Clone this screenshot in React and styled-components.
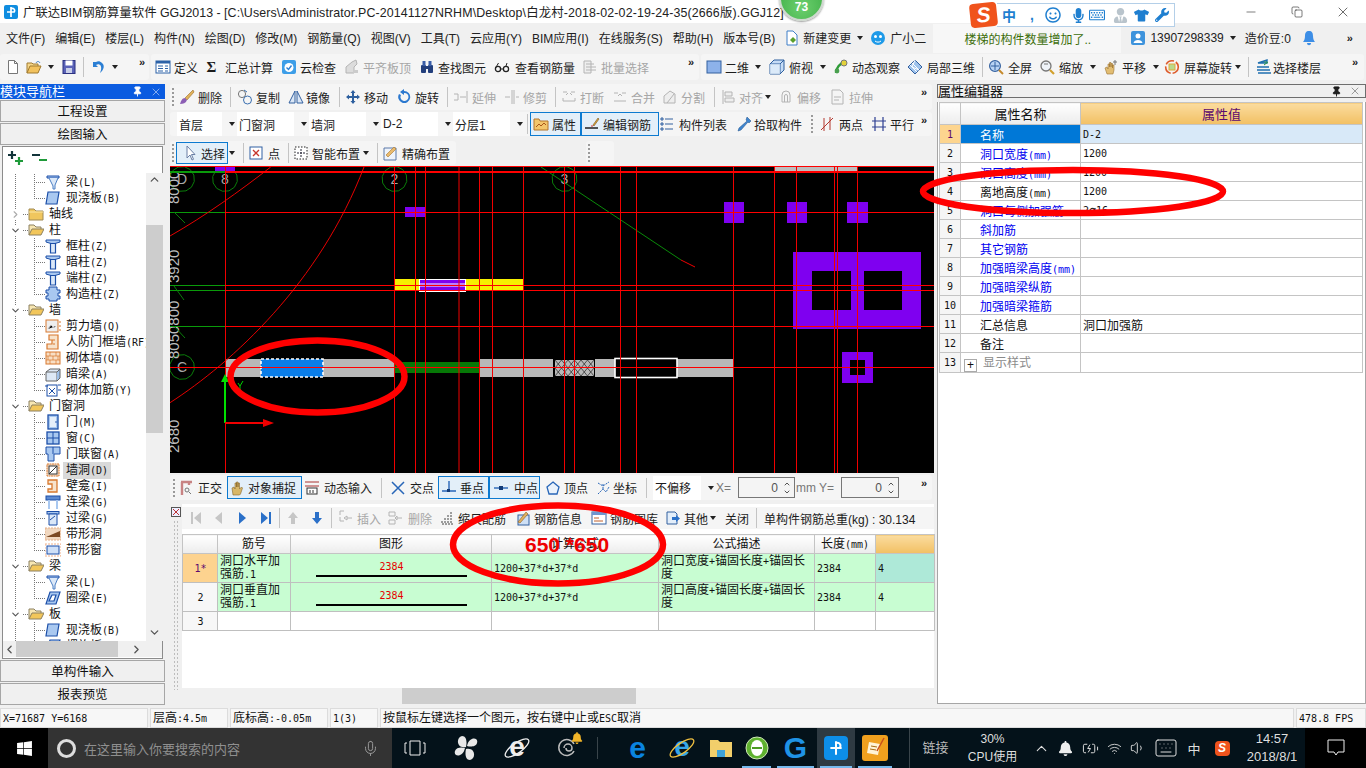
import React from "react";
import styled, { createGlobalStyle } from "styled-components";
import { FaBell, FaMicrophone, FaRegKeyboard, FaTshirt, FaWindows, FaWrench, FaRegSmile, FaUserTie } from "react-icons/fa";
import { ChevronUp, ChevronDown, ChevronLeft, ChevronRight, Mic, Wifi, Volume1, Keyboard, X, Minus, Copy, Pin, BatteryCharging } from "lucide-react";

const UI = `"Liberation Sans", "Noto Sans CJK SC", sans-serif`;

const Global = createGlobalStyle`
  html, body { margin: 0; padding: 0; background: #f0f0f0; overflow: hidden; }
  #root { width: 1366px; height: 768px; }
  * { box-sizing: border-box; }
`;

const Page = styled.div`
  position: relative;
  width: 1366px;
  height: 768px;
  overflow: hidden;
  display: flex;
  flex-direction: column;
  background: #f0f0f0;
  font-family: ${UI};
  font-size: 12px;
  color: #111;
`;

/* title + menu */
const TitleBar = styled.div`
  height: 23px;
  background: #fff;
  display: flex;
  align-items: center;
  padding-left: 3px;
  gap: 4px;
  font-size: 12.4px;
  white-space: nowrap;
  position: relative;
`;
const TitleText = styled.span`
  width: 790px;
  color: #222;
`;
const TitlePath = styled.span`
  letter-spacing: 0.13px;
`;
const WinBtns = styled.div`
  margin-left: auto;
  display: flex;
  color: #222;
`;
const WinBtn = styled.div`
  width: 46px;
  height: 23px;
  display: flex;
  align-items: center;
  justify-content: center;
`;
const MenuBar = styled.div`
  height: 31px;
  display: flex;
  align-items: center;
  padding-bottom: 2px;
  white-space: nowrap;
`;
const MenuItem = styled.span`
  padding-left: ${(p) => p.$pl ?? 10}px;
  color: #222;
`;
const NewsBox = styled.div`
  width: 188px;
  height: 29px;
  margin: 2px 0 0 7px;
  background: #f7f7f7;
  color: #3c6e0a;
  display: flex;
  align-items: center;
  padding-left: 31px;
`;

/* generic toolbar pieces */
const Bar = styled.div`
  display: flex;
  height: ${(p) => p.$h}px;
  margin-top: ${(p) => p.$mt ?? 0}px;
  gap: 2px;
  flex: none;
`;
const Strip = styled.div`
  width: ${(p) => p.$w}px;
  height: 100%;
  background: #f5f5f5;
  border-radius: 3px;
  display: flex;
  align-items: center;
  padding-left: ${(p) => p.$pl}px;
  white-space: nowrap;
  flex: none;
`;
const Slot = styled.div`
  width: ${(p) => p.$w}px;
  flex: none;
  display: flex;
  align-items: center;
  height: 100%;
  color: ${(p) => (p.$off ? "#a6a6a6" : "#1c1c1c")};
  gap: ${(p) => p.$gap ?? 3}px;
`;
const Pressed = styled.div`
  width: ${(p) => p.$w}px;
  height: ${(p) => p.$h ?? 24}px;
  flex: none;
  display: flex;
  align-items: center;
  padding-left: ${(p) => p.$pl ?? 2}px;
  gap: ${(p) => p.$gap ?? 3}px;
  background: #e3eff9;
  border: 1px solid #0c7ad0;
`;
const Caret = styled.i`
  width: 0;
  height: 0;
  border: 3px solid transparent;
  border-top: 4px solid #222;
  border-bottom: 0;
  display: block;
  margin-left: ${(p) => p.$ml ?? 0}px;
`;
const SepLine = styled.i`
  width: 1px;
  height: 20px;
  background: #c4c4c4;
  display: block;
`;
const Grip = styled.i`
  width: 2px;
  height: 18px;
  display: block;
  background-image: linear-gradient(#9a9a9a 50%, transparent 50%);
  background-size: 2px 4px;
`;
const More = styled.span`
  font-size: 11px;
  font-weight: bold;
  font-family: "Liberation Sans", sans-serif;
  align-self: flex-start;
  margin-top: 2px;
  color: #222;
`;
const ComboBox = styled.div`
  width: ${(p) => p.$w}px;
  height: 24px;
  background: #fff;
  display: flex;
  align-items: center;
  padding-left: 2px;
  flex: none;
`;
const SigmaMark = styled.span`
  font: bold 15px "Liberation Serif", serif;
  width: 13px;
  text-align: center;
`;
const SimBox = styled.span`
  font-family: "DejaVu Sans Mono", monospace;
  font-size: 10px;
`;
const FieldLabel = styled.span`
  color: #777;
`;

function Sim({ children }) {
  const parts = String(children).split(/([\x00-\x7f]+)/);
  return (
    <>
      {parts.map((p, i) => (i % 2 ? <SimBox key={i}>{p}</SimBox> : p))}
    </>
  );
}

/* tiny colored drawings, all in a 16 box */
const S = "#1c4fa8";
const L = "#a9c8f0";
const Gy = "#b4b4b4";
const Tan = "#d8792f";
const paths = {
  app: <><rect x="1" y="1" width="14" height="14" rx="2" fill="#0f8de0" /><path d="M8 3v10M4 8h8M8 5a2 2 0 0 1 3 3" stroke="#fff" strokeWidth="1.7" fill="none" /></>,
  new: <><path d="M3.5 1.5h6l3 3v10h-9z" fill="#fff" stroke="#777" /><path d="M9.5 1.5v3h3" fill="none" stroke="#777" /></>,
  open: <><path d="M1 14V4h5l1 1h5v2" fill="#f6d78a" stroke="#a07a30" /><path d="M1 14l3-7h11l-3 7z" fill="#f2c25e" stroke="#a07a30" /><path d="M10 4c1-2 3-2 4 0" stroke="#3a7dc4" fill="none" /></>,
  save: <><rect x="2" y="1.5" width="12" height="13" fill="#5a62b8" stroke="#2b3180" /><rect x="4.5" y="1.5" width="7" height="5" fill="#fff" /><rect x="5" y="9" width="6" height="5" fill="#c9cfe8" /></>,
  undo: <path d="M3 3v5h5L6 6c3-2 6 0 5 5l-1 3c4-3 5-8 2-10-2-2-4-2-6-1z" fill="#2c7fd4" />,
  define: <><rect x="1" y="2" width="14" height="12" fill="#fff" stroke="#2c62a8" /><rect x="1" y="2" width="14" height="2.5" fill="#2c62a8" /><path d="M3 7h5M3 9.5h5M3 12h5M10 7h3M10 9.5h3M10 12h3" stroke="#2c62a8" /></>,
  cloud: <><rect x="1" y="1" width="14" height="14" rx="2" fill="#3d9ee8" /><circle cx="8" cy="8.5" r="4.5" fill="#fff" /><path d="M5.5 8.5l2 2 3-4" stroke="#2c7fd4" strokeWidth="1.4" fill="none" /></>,
  flat: <><path d="M2 14V8l6-5 4-2 1 4-3 3v6z" fill="#dcdcdc" stroke={Gy} /><path d="M9 11h5v3H9z" fill="#ccc" /></>,
  binoc: <><rect x="2" y="6" width="5" height="8" rx="1" fill="#233f7c" /><rect x="9" y="6" width="5" height="8" rx="1" fill="#233f7c" /><rect x="3.5" y="2" width="3" height="5" fill="#3a5ea8" /><rect x="9.5" y="2" width="3" height="5" fill="#3a5ea8" /><rect x="6.5" y="7" width="3" height="3" fill="#233f7c" /></>,
  glasses: <><circle cx="4" cy="10" r="2.6" fill="none" stroke="#222" strokeWidth="1.3" /><circle cx="12" cy="10" r="2.6" fill="none" stroke="#222" strokeWidth="1.3" /><path d="M6.5 10h3M1.5 9l3-5M12 7l1-3" stroke="#222" /></>,
  batch: <><path d="M2 2h7v12H2z" fill="#eee" stroke={Gy} /><path d="M4 5h8M4 8h10M4 11h10" stroke={Gy} /></>,
  square: <rect x="1" y="2" width="14" height="12" fill="#8db2ea" stroke="#33609f" />,
  cube: <><path d="M1 5l4-4h10v10l-4 4H1z" fill="#c6dcf6" stroke="#2d5f9e" /><path d="M1 5h10v10M11 5l4-4" fill="none" stroke="#2d5f9e" /><path d="M1 5h10v10H1z" fill="#e4effb" opacity=".7" /></>,
  orbit: <><path d="M3 14c0-5 4-10 9-11" stroke="#2e9c37" strokeWidth="2.4" fill="none" /><circle cx="11" cy="4" r="3" fill="#e3d23a" stroke="#777" /><circle cx="4" cy="12" r="2.4" fill="#4aa04f" /></>,
  local: <><path d="M8 1l7 7-7 7-7-7z" fill="#9fc3ec" stroke="#33609f" /><path d="M5 4l7 7M8 1l-3 7 7 3M3 6l7 7" stroke="#fff" fill="none" /></>,
  full: <><circle cx="7" cy="7" r="5.4" fill="#b9d4f4" stroke="#33609f" strokeWidth="1.2" /><path d="M7 3v8M3 7h8" stroke="#33609f" /><path d="M11 11l4 4" stroke="#c58a2c" strokeWidth="2" /></>,
  zoom: <><circle cx="7" cy="7" r="5" fill="#eef3f9" stroke="#777" strokeWidth="1.3" /><path d="M11 11l4 4" stroke="#d2a02c" strokeWidth="2.2" /><path d="M5 5h4" stroke="#777" /></>,
  pan: <><path d="M4 15l-2-6 2-1 1 2V5h1.5v3V3.5H8V8V4.5h1.5V9V6H11v5l-1 4z" fill="#e2bd72" stroke="#9c7433" strokeWidth=".6" /><path d="M12 1v5M10 3h4" stroke="#777" /></>,
  spin: <><circle cx="8" cy="8" r="6.3" fill="none" stroke="#de5a2b" strokeWidth="1.6" strokeDasharray="9 2" /><rect x="5" y="5" width="6" height="6" fill="#b9d98c" stroke="#e1a93a" /></>,
  floors: <><path d="M2 4l9-3v3H2zM1 8h12M1 11h13M2 14h13" stroke="#1f6fb0" strokeWidth="1.4" fill="#6cbf54" /><path d="M8 6l4-3" stroke="#2e9c37" /></>,
  doc: <><path d="M3 1h6l4 4v10H3z" fill="#fff" stroke="#3f7fc8" /><path d="M9 7l3 3-3 3-3-3z" fill="#5aa02c" /></>,
  xiao: <><circle cx="8" cy="8" r="7" fill="#1e9ae8" /><circle cx="5.5" cy="6.5" r="1.5" fill="#fff" /><circle cx="10.5" cy="6.5" r="1.5" fill="#fff" /><path d="M5 11c2 1.5 4 1.5 6 0" stroke="#fff" fill="none" /></>,
  user: <><rect x="1" y="1" width="14" height="14" rx="2" fill="#3d93dc" /><circle cx="8" cy="6" r="2.5" fill="#fff" /><path d="M3.5 13c.5-4 8.500-4 9 0z" fill="#fff" /></>,
  alarm: <path d="M8 1c3 0 4 2 4 5 0 3 1 5 2 6H2c1-1 2-3 2-6 0-3 1-5 4-5zM6 13h4c0 3-4 3-4 0z" fill="#3d8ee6" />,
  brush: <><path d="M14 1L6 9l2 2 7-8z" fill="#e0b35a" stroke="#9c6a2a" strokeWidth=".6" /><path d="M6 9c-3 0-4 3-5 6 3 0 6-1 7-4z" fill="#8d5fb5" /></>,
  copy2: <><circle cx="5" cy="5" r="3.6" fill="none" stroke="#777" /><circle cx="10.500" cy="11" r="4" fill="none" stroke="#3a6fb0" /><path d="M7 1l3 2" stroke="#3a6fb0" /></>,
  mirror: <path d="M7 2L1 14h6zM9 2l6 12H9z" fill="#dbe7f6" stroke="#33609f" />,
  move: <path d="M8 1l2.500 3H9v3h3V5.500L15 8l-3 2.500V9H9v3h1.500L8 15l-2.500-3H7V9H4v1.500L1 8l3-2.500V7h3V4H5.500z" fill="#2d5f9e" />,
  rotate: <path d="M8 2a6 6 0 1 1-5 3l2 1a4 4 0 1 0 3-2v2L4 3l4-3z" fill="#2b78cf" />,
  extend: <path d="M1 5h4v6H1M7 8h6M14 2v12" stroke={Gy} fill="none" />,
  trim: <path d="M8 1v14M10 1v14M1 8h5M12 8h3" stroke={Gy} fill="none" />,
  brk: <path d="M2 3h4M10 3h4M2 12h12V9M2 9v3M5 6l2-2M11 6L9 4" stroke={Gy} fill="none" />,
  merge: <path d="M2 4h4M10 4h4M2 12h12M6 7l2-2 2 2" stroke={Gy} fill="none" />,
  split: <path d="M2 14V7l6-5 5 3v9zM5 14l7-9" stroke={Gy} fill="#eee" />,
  align: <path d="M3 1v14M5 3h7v4H5zM5 9h9v4H5z" stroke={Gy} fill="#eee" />,
  offset: <path d="M4 13V6a4 4 0 0 1 8 0v7zM6.500 13V7a1.500 1.500 0 0 1 3 0v6" stroke={Gy} fill="none" />,
  stretch: <path d="M2 1h8l3 3v11H2zM4 8h7M4 11h5" stroke={Gy} fill="#f4f4f4" />,
  attr: <><path d="M1 3h5l1 2h8v9H1z" fill="#f3c66b" stroke="#b4742a" /><path d="M3 11l3-3 2 2 3-3 2 2" stroke="#a9561a" fill="none" /></>,
  pencil: <><path d="M9 9l5-7 1 1-5 7z" fill="#d8a03a" stroke="#7d5a1e" strokeWidth=".6" /><path d="M1 12h13" stroke="#111" strokeWidth="1.400" /><path d="M7 10h2" stroke="#c33" /></>,
  list: <path d="M2 2h2v2H2zM2 7h2v2H2zM2 12h2v2H2zM6 3h8M6 8h8M6 13h8" stroke="#33609f" fill="#cfe0f5" />,
  dropper: <path d="M11 1l4 4-2 2-1-1-7 8-3 1 1-3 8-7-1-1z" fill="#3f86cf" stroke="#1f4f88" strokeWidth=".5" />,
  two: <path d="M2 14L14 2M5 2v13M11 1v13" stroke="#b4382f" fill="none" />,
  par: <path d="M4 1v14M12 1v14M1 5h14M1 11h14" stroke="#2e3f92" strokeWidth="1.2" />,
  cursor: <path d="M5 1v12l3-3 2 5 1.500-.7-2-4.800H13z" fill="#fff" stroke="#6a7fa5" />,
  point: <><rect x="2" y="2" width="12" height="12" fill="#fff" stroke="#3160a4" /><path d="M5 5l6 6M11 5l-6 6" stroke="#c6362c" strokeWidth="1.300" /></>,
  smart: <><rect x="2" y="2" width="12" height="12" fill="#fff" stroke="#222" strokeDasharray="1.500 1.500" /><path d="M8 4v8M4 8h8" stroke="#223" strokeDasharray="2 1" /></>,
  precise: <><path d="M2 3h12v12H2z" fill="#eef3fa" stroke="#5a78a8" /><path d="M4 10l8-8 2 2-8 8z" fill="#e9bb6e" stroke="#a8742c" strokeWidth=".6" /></>,
  ortho: <><path d="M3 2h11M4 2v13M11 2v3" stroke="#c88383" strokeWidth="2.400" fill="none" /><circle cx="9" cy="10" r="2" fill="none" stroke="#777" /><path d="M11 12l2 2" stroke="#777" /></>,
  snap: <path d="M3 15l-1-7 2-1 1 2V3h1.500v4-5H8v5V3h1.500v6l2-2 1 1-2 6-1 1z" fill="#d8b768" stroke="#87662b" strokeWidth=".6" />,
  dyn: <><path d="M1 2h14M1 6h14" stroke="#a33" /><rect x="3" y="8" width="10" height="6" fill="#fff" stroke="#333" /><path d="M6 10v3M9 10v3" stroke="#333" /></>,
  cross: <path d="M2 2l12 12M14 2L2 14" stroke="#2866b8" strokeWidth="1.500" />,
  perp: <><path d="M8 1v10M1 11h14" stroke="#2866b8" strokeWidth="1.400" /><rect x="6" y="9" width="3" height="3" fill="#123c78" /></>,
  mid: <><path d="M1 8h14" stroke="#2866b8" strokeWidth="1.400" /><rect x="6" y="6" width="4" height="4" fill="#123c78" /></>,
  vertex: <path d="M8 2l6 5-2 7H4L2 7z" fill="#eaf2fb" stroke="#2866b8" strokeWidth="1.300" />,
  coord: <path d="M3 14l5-5 3 3 3-5M8 9V3M3 3l5 3 6-4" stroke="#2866b8" strokeDasharray="2 1" fill="none" />,
  first: <path d="M3 2h2v12H3zM13 2v12L6 8z" fill="#c6c6c6" />,
  prev: <path d="M12 2v12L5 8z" fill="#c6c6c6" />,
  next: <path d="M5 2v12l7-6z" fill="#2b70c8" />,
  last: <path d="M3 2v12l7-6zM11 2h2v12h-2z" fill="#2b70c8" />,
  up: <path d="M8 2l5 6h-3v6H6V8H3z" fill="#c6c6c6" />,
  down: <path d="M8 14l5-6h-3V2H6v6H3z" fill="#2b70c8" />,
  ins: <path d="M3 1h4M3 1v4M3 7v4M3 11h4M10 6l-3 2 3 2zM10 8h5" stroke={Gy} fill="none" />,
  del: <path d="M2 2h6v4H2zM2 10h6v4H2zM10 8h5M8 8l2-2v4z" stroke={Gy} fill="none" />,
  scale: <path d="M2 14h12M2 11v3M5 8v6M8 5v9M11 2v12" stroke="#444" strokeDasharray="2 1" fill="none" />,
  info: <><rect x="3" y="5" width="11" height="10" fill="#cfe0f5" stroke="#33609f" /><path d="M3 12l8-10 2 2-8 9z" fill="#e1b25f" stroke="#8a5a20" strokeWidth=".6" /></>,
  lib: <><rect x="1" y="2" width="14" height="12" fill="#fff" stroke="#33609f" /><rect x="1" y="2" width="14" height="3" fill="#6f96cf" /><path d="M3 8h5M3 11h9" stroke="#c0612c" /></>,
  other: <><path d="M2 2h8l2 2v10H2z" fill="#e3eefa" stroke="#33609f" /><path d="M7 7h4V5l4 3.500-4 3.500v-2H7z" fill="#2b70c8" /></>,
  folder: <><path d="M1 5V3h5l2 2h7v9H1z" fill="#f0c65e" stroke="#a08a55" /><path d="M1 6h14" stroke="#fbe7a6" /></>,
  folderOpen: <><path d="M1 13V3h5l2 2h5v2" fill="#f7e6b2" stroke="#8c8060" /><path d="M1 13l3-6h12l-3 6z" fill="#f2c65a" stroke="#8c8060" /></>,
  beam: <><path d="M2 2h12v2H2z" fill={L} stroke={S} /><path d="M4 4l4 8v3h2v-4l3-7" fill="#dbe8f8" stroke="#4b7fc4" /></>,
  slab: <path d="M3 2h11l-2 12H1z" fill={L} stroke={S} strokeWidth="1.200" />,
  column: <><path d="M1 2h14v2L10 5.500H6L1 4z" fill={L} stroke={S} /><path d="M5.500 5.500h5V15h-5z" fill="#dbe8f8" stroke={S} strokeWidth="1.200" /></>,
  grid: <path d="M4 1h8v3h3v3h-2v3h2v3h-3v2H4v-2H1v-3h2V7H1V4h3z" fill={L} stroke={S} />,
  shear: <><rect x="1" y="2" width="12" height="12" fill="#eee" stroke={Tan} /><path d="M3 11l3-4 3 3 2-2" stroke="#bbb" /><path d="M14 4h2M14 8h2M14 12h2" stroke={Tan} /></>,
  frame: <path d="M4 1h9v14H2v-5h5V6H4zM7 6h3M8 10h2" fill="#f7e3cc" stroke={Tan} strokeWidth="1.200" />,
  brick: <><rect x="1" y="2" width="14" height="12" fill="#f8dfc5" stroke={Tan} /><path d="M1 6h14M1 10h14M5 2v4M11 2v4M8 6v4M3 6v4M13 6v4M5 10v4M11 10v4" stroke={Tan} strokeWidth=".7" /></>,
  hidden: <><path d="M1 6l4-3h10l-3 3v9H1z" fill="#dde8f5" stroke="#666" /><path d="M12 6H1M12 6l3-3v9l-3 3" stroke="#666" fill="#9fc0e8" /></>,
  reinf: <><rect x="2" y="3" width="10" height="11" fill="#fff" stroke={S} /><path d="M4 6l6 6M10 6l-6 6M13 3h3M13 8h3M0 4h3" stroke={S} /></>,
  door: <><rect x="3" y="1" width="10" height="14" fill={L} stroke={S} strokeWidth="1.300" /><rect x="5" y="3" width="6" height="10" fill="#e6effa" /><circle cx="11" cy="8" r=".8" fill={S} /></>,
  window: <><rect x="2" y="2" width="12" height="12" fill={L} stroke={S} strokeWidth="1.300" /><path d="M8 2v12M2 8h12" stroke={S} /></>,
  doorwin: <><path d="M1 1h14v7H9v7H3V8H1z" fill={L} stroke={S} /><path d="M8 1v7" stroke={S} /></>,
  hole: <><rect x="2" y="2" width="12" height="12" fill="#f3e1cf" stroke={Tan} strokeDasharray="2 .5" /><rect x="4" y="4" width="8" height="8" fill="#fff" stroke="#333" /><path d="M4 12l8-8" stroke="#333" /></>,
  niche: <path d="M3 2h9v12H3v-3h4V6H3z" fill="#f7e3cc" stroke={Tan} strokeWidth="1.300" />,
  link: <><rect x="1" y="2" width="14" height="4" fill="#5d8ad0" stroke={S} /><path d="M4 6v9M12 6v9" stroke={L} strokeWidth="2" /></>,
  lintel: <><rect x="2" y="1.500" width="12" height="2.500" fill={L} stroke={S} /><path d="M4 4h8v11H4z" fill="#dbe8f8" stroke={S} /><path d="M5 10l5-4" stroke={S} /></>,
  stripHole: <><rect x="0" y="2" width="16" height="12" fill="#f1d8c0" stroke="#e6b08a" strokeDasharray="2 1" /><path d="M1 11l14-6v6z" fill="#7c4a24" /></>,
  stripWin: <><rect x="0" y="2" width="16" height="12" fill="#fff" stroke="#f0b08a" strokeDasharray="2 1" /><rect x="2" y="4" width="12" height="8" fill="#cfe0f8" stroke={S} /></>,
  ring: <path d="M5 2h10l-4 12H1zM7 5l-3 6h5l2-6z" fill={L} stroke={S} strokeWidth="1.200" />,
};

const Svg = styled.svg`
  flex: none;
  display: block;
`;
const Icon = ({ n, s = 16 }) => (
  <Svg width={s} height={s} viewBox="0 0 16 16">
    {paths[n]}
  </Svg>
);

/* one toolbar row: x positions turned into widths of flowed slots */
const T = (x, icon, label, o = {}) => ({ x, kind: "tool", icon, label, ...o });
const A = (x) => ({ x, kind: "arrow" });
const Sp = (x) => ({ x, kind: "sep" });
const Gp = (x) => ({ x, kind: "grip" });
const Mo = (x) => ({ x, kind: "more" });
const Cb = (x, label, w) => ({ x, kind: "combo", label, w });
const Nd = (x, node) => ({ x, kind: "node", node });

function ToolStrip({ from, to, items }) {
  return (
    <Strip $w={to - from} $pl={items[0].x - from}>
      {items.map((it, i) => {
        const w = (i + 1 < items.length ? items[i + 1].x : to) - it.x;
        if (it.kind === "arrow")
          return (
            <Slot key={i} $w={w}>
              <Caret />
            </Slot>
          );
        if (it.kind === "sep")
          return (
            <Slot key={i} $w={w}>
              <SepLine />
            </Slot>
          );
        if (it.kind === "grip")
          return (
            <Slot key={i} $w={w}>
              <Grip />
            </Slot>
          );
        if (it.kind === "more")
          return (
            <Slot key={i} $w={w}>
              <More>»</More>
            </Slot>
          );
        if (it.kind === "node")
          return (
            <Slot key={i} $w={w}>
              {it.node}
            </Slot>
          );
        if (it.kind === "combo")
          return (
            <Slot key={i} $w={w}>
              <ComboBox $w={it.w}>{it.label}</ComboBox>
              <Caret $ml={4} />
            </Slot>
          );
        const body = (
          <>
            {it.icon === "sigma" ? <SigmaMark>Σ</SigmaMark> : <Icon n={it.icon} s={it.s ?? 16} />}
            {it.label}
          </>
        );
        if (it.active)
          return (
            <Slot key={i} $w={w}>
              <Pressed $w={it.bw ?? w} $h={it.h} $pl={it.pl} $gap={it.gap}>
                {body}
              </Pressed>
            </Slot>
          );
        return (
          <Slot key={i} $w={w} $off={it.off} $gap={it.gap}>
            {body}
          </Slot>
        );
      })}
    </Strip>
  );
}

/* left navigation */
const Workspace = styled.div`
  height: 624px;
  margin-top: 4px;
  display: flex;
  flex: none;
`;
const NavPanel = styled.div`
  width: 165px;
  display: flex;
  flex-direction: column;
  flex: none;
`;
const NavHead = styled.div`
  height: 15px;
  background: #0a5be0;
  color: #fff;
  font-size: 13px;
  line-height: 15px;
  display: flex;
  align-items: center;
`;
const HeadTools = styled.div`
  margin-left: auto;
  display: flex;
  gap: 7px;
  padding-right: ${(p) => p.$pr ?? 3}px;
  align-items: center;
`;
const NavBtn = styled.div`
  height: 22px;
  margin-top: 1px;
  background: #f0f0f0;
  border: 1px solid #a6a6a6;
  text-align: center;
  line-height: 23px;
  font-size: 12.5px;
`;
const TreeBox = styled.div`
  margin: 1px 2px 0 2px;
  height: 513px;
  border: 1px solid #8c8c8c;
  background: #fff;
  display: flex;
  flex-direction: column;
`;
const TreeTools = styled.div`
  height: 26px;
  display: flex;
  align-items: flex-start;
  padding: 2px 0 0 2px;
  flex: none;
`;
const TreeMid = styled.div`
  display: flex;
  height: 468px;
  flex: none;
`;
const TreeView = styled.div`
  width: 143px;
  overflow: hidden;
  flex: none;
  padding-top: 1px;
`;
const Row = styled.div`
  height: 16px;
  position: relative;
  display: flex;
  align-items: center;
  white-space: nowrap;
  padding-left: ${(p) => (p.$child ? 31 : 5)}px;
  &::before {
    content: "";
    position: absolute;
    left: 12px;
    top: 0;
    width: 1px;
    height: 16px;
    background: linear-gradient(#777 50%, transparent 50%) 0 0 / 1px 2px repeat-y;
  }
  &::after {
    content: "";
    position: absolute;
    left: 31px;
    top: 0;
    width: 1px;
    height: ${(p) => (p.$last ? 8 : 16)}px;
    display: ${(p) => (p.$child ? "block" : "none")};
    background: linear-gradient(#777 50%, transparent 50%) 0 0 / 1px 2px repeat-y;
  }
`;
const Hook = styled.i`
  width: ${(p) => p.$w}px;
  flex: none;
  height: 1px;
  display: block;
  background: linear-gradient(90deg, #777 50%, transparent 50%) 0 0 / 2px 1px repeat-x;
`;
const Chevron = styled.span`
  width: 15px;
  flex: none;
  display: flex;
  justify-content: center;
  color: #555;
  position: relative;
  z-index: 1;
  background: #fff;
`;
const RowLabel = styled.span`
  padding: 0 3px;
  margin-left: ${(p) => p.$ml ?? 2}px;
  line-height: 16px;
  background: ${(p) => (p.$sel ? "#d9d9d9" : "transparent")};
`;
const VBar = styled.div`
  width: 17px;
  flex: none;
  background: #f0f0f0;
  display: flex;
  flex-direction: column;
  align-items: center;
  color: #555;
`;
const Thumb = styled.div`
  width: 17px;
  height: ${(p) => p.$h}px;
  margin-top: ${(p) => p.$mt}px;
  background: #cdcdcd;
`;
const HBar = styled.div`
  height: 16px;
  flex: none;
  background: #f0f0f0;
  display: flex;
  align-items: center;
  color: #555;
  justify-content: space-between;
  padding-right: 19px;
`;
const HThumb = styled.div`
  width: ${(p) => p.$w}px;
  height: 16px;
  margin-left: ${(p) => p.$ml ?? 0}px;
  background: #cdcdcd;
`;

const tree = [
  ["c", "beam", "梁(L)"], ["c", "slab", "现浇板(B)", 1],
  ["f", 0, "轴线"],
  ["f", 1, "柱"], ["c", "column", "框柱(Z)"], ["c", "column", "暗柱(Z)"], ["c", "column", "端柱(Z)"], ["c", "grid", "构造柱(Z)", 1],
  ["f", 1, "墙"], ["c", "shear", "剪力墙(Q)"], ["c", "frame", "人防门框墙(RF)"], ["c", "brick", "砌体墙(Q)"], ["c", "hidden", "暗梁(A)"], ["c", "reinf", "砌体加筋(Y)", 1],
  ["f", 1, "门窗洞"], ["c", "door", "门(M)"], ["c", "window", "窗(C)"], ["c", "doorwin", "门联窗(A)"], ["c", "hole", "墙洞(D)", 0, 1], ["c", "niche", "壁龛(I)"], ["c", "link", "连梁(G)"], ["c", "lintel", "过梁(G)"], ["c", "stripHole", "带形洞"], ["c", "stripWin", "带形窗", 1],
  ["f", 1, "梁"], ["c", "beam", "梁(L)"], ["c", "ring", "圈梁(E)", 1],
  ["f", 1, "板"], ["c", "slab", "现浇板(B)"], ["c", "ring", "螺旋板(B)"],
];

/* center */
const Center = styled.div`
  width: 764px;
  margin-left: 5px;
  display: flex;
  flex-direction: column;
  flex: none;
`;
const Canvas = styled.svg`
  display: block;
  flex: none;
  margin-top: 1px;
  background: #000;
`;
const Lower = styled.div`
  height: 200px;
  margin-top: 4px;
  display: flex;
  flex: none;
`;
const Gutter = styled.div`
  width: 12px;
  flex: none;
  padding-top: 3px;
  display: flex;
  flex-direction: column;
  align-items: center;
  gap: 3px;
`;
const GutterDots = styled.i`
  width: 6px;
  height: 170px;
  display: block;
  background: radial-gradient(#bdbdbd 1px, transparent 1px) 0 0 / 3px 4px;
`;
const Pane = styled.div`
  width: 752px;
  flex: none;
  display: flex;
  flex-direction: column;
  background: #fff;
`;
const PaneBar = styled.div`
  height: 22px;
  margin-top: 3px;
  background: #f5f5f5;
  display: flex;
  flex: none;
`;
const Grid = styled.table`
  margin-top: 5px;
  border-collapse: collapse;
  table-layout: fixed;
  width: 752px;
  flex: none;
  line-height: 13px;
`;
const Th = styled.th`
  height: 19px;
  padding: 0;
  font-weight: normal;
  border: 1px solid #c4c4c4;
  background: ${(p) => (p.$hot ? "linear-gradient(#fbdc9f, #f2c063)" : "linear-gradient(#fff, #ececec)")};
`;
const Td = styled.td`
  height: ${(p) => p.$h}px;
  padding: 0 1px 0 2px;
  border: 1px solid #bfbfbf;
  border-left: ${(p) => (p.$ink ? "1px solid #000" : "1px solid #bfbfbf")};
  background: ${(p) => p.$bg ?? "#fff"};
  text-align: ${(p) => (p.$mid ? "center" : "left")};
  vertical-align: middle;
  color: ${(p) => p.$fg ?? "#111"};
`;
const FigLen = styled.div`
  color: #e60000;
  text-align: center;
  height: 13px;
  margin-top: 1px;
`;
const FigBar = styled.div`
  width: 151px;
  height: 2px;
  background: #000;
  margin: 2px auto 0;
`;
const BottomScroll = styled.div`
  margin-top: auto;
  height: 16px;
  background: #f0f0f0;
  padding-left: 220px;
  flex: none;
`;
const Spin = styled.div`
  width: ${(p) => p.$w}px;
  height: 21px;
  background: #f4f4f4;
  border: 1px solid #777;
  display: flex;
  align-items: center;
  justify-content: flex-end;
  padding-right: 3px;
  gap: 5px;
  color: #555;
  font-family: "Liberation Sans", sans-serif;
  flex: none;
`;
const SpinArrows = styled.div`
  display: flex;
  flex-direction: column;
  color: #555;
`;
const SpacerGap = styled.div`
  width: ${(p) => p.$w}px;
  flex: none;
`;

/* right panel */
const RightPanel = styled.div`
  width: 429px;
  margin-left: 3px;
  flex: none;
  display: flex;
  flex-direction: column;
`;
const RightHead = styled.div`
  height: 14px;
  border: 1px solid #6e6e6e;
  background: #f0f0f0;
  font-size: 13px;
  line-height: 13px;
  display: flex;
  align-items: center;
`;
const RightBody = styled.div`
  margin-top: 4px;
  height: 602px;
  background: #fff;
  border: 1px solid #a6a6a6;
  border-top: 0;
  padding-left: 1px;
`;
const PropGrid = styled.table`
  border-collapse: collapse;
  table-layout: fixed;
  width: 423px;
`;
const PropHead = styled.th`
  height: 22px;
  padding: 0;
  font-weight: normal;
  font-size: 13px;
  border: 1px solid #c4c4c4;
  background: ${(p) => (p.$hot ? "linear-gradient(#fbdc9f, #f2c063)" : "linear-gradient(#fff, #ececec)")};
  color: ${(p) => (p.$hot ? "#5c0a6e" : "#111")};
`;
const PropNum = styled.td`
  height: 19px;
  padding: 0;
  border: 1px solid #c4c4c4;
  text-align: center;
  background: ${(p) => (p.$on ? "#fdd58f" : "#f5f5f5")};
  color: ${(p) => (p.$on ? "#5c0a6e" : "#111")};
`;
const PropName = styled.td`
  padding: 0 0 0 19px;
  white-space: nowrap;
  border: 1px solid #c4c4c4;
  background: ${(p) => (p.$on ? "#0078d7" : "#fff")};
  color: ${(p) => p.$fg};
`;
const PropVal = styled.td`
  padding: 0 0 0 2px;
  border: 1px solid #c4c4c4;
  background: ${(p) => (p.$on ? "#d8e9f8" : "#fff")};
`;
const PlusBox = styled.span`
  display: inline-flex;
  width: 13px;
  height: 13px;
  border: 1px solid #aaa;
  align-items: center;
  justify-content: center;
  margin: 0 6px 0 -16px;
  font-size: 12px;
  line-height: 1;
  color: #111;
  vertical-align: -2px;
`;

const props_ = [
  ["名称", "D-2", "#fff", 1],
  ["洞口宽度(mm)", "1200", "#0000f0"],
  ["洞口高度(mm)", "1200", "#0000f0"],
  ["离地高度(mm)", "1200", "#111"],
  ["洞口每侧加强筋", "2⌀16", "#0000f0"],
  ["斜加筋", "", "#0000f0"],
  ["其它钢筋", "", "#0000f0"],
  ["加强暗梁高度(mm)", "", "#0000f0"],
  ["加强暗梁纵筋", "", "#0000f0"],
  ["加强暗梁箍筋", "", "#0000f0"],
  ["汇总信息", "洞口加强筋", "#111"],
  ["备注", "", "#111"],
  ["显示样式", "", "#8a8a8a"],
];

/* status + taskbar */
const StatusBar = styled.div`
  height: 20px;
  display: flex;
  gap: 2px;
  flex: none;
`;
const StatusCell = styled.div`
  width: ${(p) => p.$w}px;
  flex: none;
  background: #f7f7f7;
  border: 1px solid #dcdcdc;
  padding-left: 2px;
  line-height: 19px;
  white-space: nowrap;
`;
const TaskBar = styled.div`
  height: 40px;
  flex: none;
  display: flex;
  background: #04121a;
  color: #ddd;
`;
const StartBtn = styled.div`
  width: 48px;
  background: #000;
  display: flex;
  align-items: center;
  justify-content: center;
  color: #fff;
  flex: none;
`;
const Search = styled.div`
  width: 344px;
  background: #333;
  display: flex;
  align-items: center;
  padding-left: 9px;
  gap: 8px;
  color: #8f8f8f;
  flex: none;
  font-size: 13px;
`;
const Ring = styled.i`
  width: 19px;
  height: 19px;
  border: 3px solid #ddd;
  border-radius: 50%;
  display: block;
`;
const MicWrap = styled.span`
  margin-left: auto;
  padding-right: 13px;
  display: flex;
  color: #999;
`;
const TaskSlot = styled.div`
  width: ${(p) => p.$w}px;
  margin-left: ${(p) => p.$ml ?? 0}px;
  flex: none;
  display: flex;
  align-items: center;
  justify-content: center;
  position: relative;
  font-size: 13px;
  background: ${(p) => (p.$cur ? "#2e3a42" : p.$black ? "#000" : "transparent")};
  &::after {
    content: "";
    position: absolute;
    bottom: 0;
    left: 3px;
    right: 3px;
    height: 2px;
    background: ${(p) => (p.$run ? "#76b9ed" : "transparent")};
  }
`;
const TaskDivider = styled.i`
  width: 1px;
  height: 22px;
  background: #39444a;
  display: block;
  margin-right: 13px;
`;
const Stack = styled.div`
  width: ${(p) => p.$w}px;
  margin-left: ${(p) => p.$ml ?? 0}px;
  flex: none;
  display: flex;
  flex-direction: column;
  align-items: center;
  justify-content: center;
  line-height: 18px;
  font-size: ${(p) => p.$fs ?? 12}px;
  color: ${(p) => p.$c ?? "#dfdfdf"};
  border-left: ${(p) => (p.$rule ? "1px solid #39444a" : "0")};
  white-space: nowrap;
`;
const LetterTile = styled.span`
  width: ${(p) => p.$s}px;
  height: ${(p) => p.$s}px;
  border-radius: 4px;
  background: ${(p) => p.$bg};
  color: #fff;
  display: flex;
  align-items: center;
  justify-content: center;
  font: italic bold ${(p) => p.$fs}px "Liberation Sans", sans-serif;
`;
const TaskGlyph = styled.span`
  font: ${(p) => (p.$italic ? "italic" : "normal")} bold ${(p) => p.$fs}px "Liberation Sans", sans-serif;
  color: ${(p) => p.$c};
`;
const BellOver = styled(FaBell)`
  position: absolute;
  top: 4px;
  right: 11px;
`;

/* overlays */
const Notes = styled.svg`
  position: absolute;
  left: 0;
  top: 0;
  pointer-events: none;
`;
const RedNote = styled.div`
  position: absolute;
  left: 525px;
  top: 533px;
  color: #ee0000;
  font: bold 21px/24px "Liberation Sans", sans-serif;
  white-space: nowrap;
`;
const Badge = styled.div`
  position: absolute;
  left: 779px;
  top: -24px;
  width: 45px;
  height: 45px;
  border-radius: 50%;
  background: radial-gradient(circle at 50% 70%, #6ccf6e, #35a83e);
  border: 2px solid #cfd8cf;
  box-shadow: 0 1px 2px rgba(0, 0, 0, 0.4);
  color: #fff;
  font: bold 12px "Liberation Sans", sans-serif;
  display: flex;
  align-items: flex-end;
  justify-content: center;
  padding-bottom: 5px;
`;
const Sogou = styled.div`
  position: absolute;
  left: 970px;
  top: 3px;
  width: 205px;
  height: 24px;
  display: flex;
  align-items: center;
`;
const SogouLogo = styled.div`
  width: 27px;
  height: 24px;
  background: #f0531c;
  border-radius: 4px;
  color: #fff;
  font: italic bold 21px/24px "Liberation Sans", sans-serif;
  text-align: center;
  transform: rotate(-6deg);
  flex: none;
`;
const SogouBox = styled.div`
  flex: 1;
  height: 24px;
  background: #fff;
  border: 1px solid #b4cfe8;
  border-left: 0;
  display: flex;
  align-items: center;
  color: #1f7fd0;
  padding-left: 5px;
`;
const SogouItem = styled.span`
  width: ${(p) => p.$w}px;
  flex: none;
  display: flex;
  color: ${(p) => p.$c ?? "#1f7fd0"};
  font-weight: bold;
  font-size: 14px;
`;

const cornerPoly = (cx, cy, r) =>
  Array.from({ length: 12 }, (_, i) => {
    const a = (i * Math.PI) / 6 + 0.2;
    return `${cx + r * Math.cos(a)},${cy + r * Math.sin(a)}`;
  }).join(" ");

const vLines = [225.5, 394.5, 415.5, 425.5, 459, 479.5, 492.5, 523.5, 564.5, 574.5, 620.5, 636.5, 733.5, 774.5, 796.5, 834.5, 837.5, 857.5];

function Drawing() {
  const purple = "#7f00f0";
  return (
    <Canvas width="764" height="307" viewBox="170 166 764 307">
      {/* axis bubbles */}
      {[[182, 179, "D"], [225, 179, "8"], [394.5, 179, "2"], [564.5, 179, "3"], [182, 367, "C"]].map(([x, y, t]) => (
        <g key={x + "" + y}>
          <polygon points={cornerPoly(x, y, 12.5)} fill="none" stroke="#0a7d0a" />
          <text x={x} y={y + 5} textAnchor="middle" fill="#a8a8a8" fontSize="14" fontFamily="Liberation Sans">{t}</text>
        </g>
      ))}
      {/* dimension text */}
      {[["8000", 204], ["3920", 283], ["8050800", 359], ["2680", 453]].map(([t, y]) => (
        <text key={t} transform={`rotate(-90 179 ${y})`} x="179" y={y} fill="#bdbdbd" fontSize="15" fontFamily="Liberation Sans">{t}</text>
      ))}
      <rect x="215" y="166" width="20" height="6" fill={purple} />
      <rect x="775" y="167" width="83" height="5" fill="#bdbdbd" />
      {/* walls */}
      <rect x="225.5" y="359" width="169" height="18" fill="#b8b8b8" />
      <rect x="394.5" y="362" width="85" height="11" fill="#067806" />
      <rect x="479.5" y="359" width="73.500" height="18" fill="#b8b8b8" />
      <rect x="595" y="359" width="138" height="18" fill="#b8b8b8" />
      <g>
        <rect x="555" y="360" width="39" height="16" fill="#b8b8b8" />
        {[0, 1, 2, 3, 4, 5].map((i) => (
          <path key={i} d={`M${555 + i * 6.5} 360l6.500 8-6.500 8M${561.5 + i * 6.5} 360l-6.500 8 6.500 8`} stroke="#222" fill="none" strokeWidth=".7" />
        ))}
      </g>
      <rect x="615" y="358.500" width="62" height="19" fill="#000" stroke="#fff" strokeWidth="1.600" />
      <rect x="261" y="359" width="62" height="18" fill="#0a7de8" stroke="#fff" strokeWidth="1.600" strokeDasharray="3 2" />
      {/* yellow beam */}
      <rect x="394.5" y="279" width="129" height="11" fill="#f6f000" />
      <rect x="419.5" y="279.500" width="46" height="12" fill={purple} stroke="#fff" />
      <path d="M419.500 284h46M419.500 286h46" stroke="#fff" />
      {/* purple columns */}
      <rect x="405" y="207" width="20" height="10" fill={purple} />
      <rect x="724" y="202" width="20" height="21" fill={purple} />
      <rect x="787" y="202" width="20" height="21" fill={purple} />
      <rect x="847" y="202" width="21" height="21" fill={purple} />
      <path fillRule="evenodd" d="M793 252h128v77H793zM812 271v39h39v-39zM864 271v39h38v-39z" fill={purple} />
      <path fillRule="evenodd" d="M842 352h31v31h-31zM850 360v15h15v-15z" fill={purple} />
      {/* green axis stubs */}
      {[212, 285, 290, 326].map((y) => (
        <path key={y} d={`M170 ${y + 0.5}h55`} stroke="#0a9a0a" />
      ))}
      <path d="M170 172h55" stroke="#0a9a0a" strokeWidth="2" />
      <path d="M174 212l11 11M174 286l10 14M174 326l11 12" stroke="#0a7d0a" />
      <path d="M541 167l140 93" stroke="#0a8a0a" />
      <path d="M681 260l14 7" stroke="#e00" />
      {/* red arcs */}
      <path d="M170 236c35-20 70-45 100.700-69" stroke="#e60000" fill="none" />
      <path d="M170 402.700c62-40 150-120 194-235.700" stroke="#e60000" fill="none" />
      {/* red grid */}
      {vLines.map((x) => (
        <path key={x} d={`M${x} 166v307`} stroke="#f00000" />
      ))}
      <path d="M170 166.500h764" stroke="#f00" />
      <path d="M225 172h709" stroke="#f00" strokeWidth="2" />
      {[212.5, 285.5, 290.5, 326.5].map((y) => (
        <path key={y} d={`M225 ${y}h709`} stroke="#f00" />
      ))}
      <path d="M170 367.500h764" stroke="#f00" />
      {/* origin */}
      <path d="M225 423v-42" stroke="#00e000" strokeWidth="2" />
      <path d="M221 382l4-8 4 8z" fill="#00e000" />
      <path d="M238 383l2 3 3-5M240 386v4" stroke="#00d000" fill="none" />
      <path d="M225 423h38" stroke="#f00000" strokeWidth="2" />
      <path d="M263 419l11 4-11 4z" fill="#f00000" />
    </Canvas>
  );
}

const menuLeft = ["文件(F)", "编辑(E)", "楼层(L)", "构件(N)", "绘图(D)", "修改(M)", "钢筋量(Q)", "视图(V)", "工具(T)", "云应用(Y)", "BIM应用(I)", "在线服务(S)", "帮助(H)", "版本号(B)"];

const SpinField = ({ w }) => (
  <Spin $w={w}>
    0
    <SpinArrows>
      <ChevronUp size={8} strokeWidth={3} />
      <ChevronDown size={8} strokeWidth={3} />
    </SpinArrows>
  </Spin>
);

const IeMark = ({ c, ring }) => (
  <Svg width="28" height="28" viewBox="0 0 28 28">
    <text x="14" y="22" textAnchor="middle" fontSize="28" fontWeight="bold" fontFamily="Liberation Sans" fill={c}>e</text>
    <ellipse cx="14" cy="14" rx="14" ry="5" transform="rotate(-35 14 14)" fill="none" stroke={ring} strokeWidth="1.300" />
  </Svg>
);

export default function App() {
  return (
    <Page>
      <Global />
      <TitleBar>
        <Icon n="app" s={16} />
        <TitleText>广联达BIM钢筋算量软件 GGJ2013 - <TitlePath>[C:\Users\Administrator.PC-20141127NRHM\Desktop\白龙村-2018-02-02-19-24-35(2666版).GGJ12]</TitlePath></TitleText>
        <WinBtns>
          <WinBtn><Minus size={14} strokeWidth={1} /></WinBtn>
          <WinBtn><Copy size={12} strokeWidth={1.2} /></WinBtn>
          <WinBtn><X size={16} strokeWidth={1} /></WinBtn>
        </WinBtns>
      </TitleBar>

      <MenuBar>
        {menuLeft.map((m, i) => (
          <MenuItem key={m} $pl={i ? 10 : 6}>{m}</MenuItem>
        ))}
        <MenuItem $pl={9}><Icon n="doc" /></MenuItem>
        <MenuItem $pl={3}>新建变更</MenuItem>
        <MenuItem $pl={6}><Caret /></MenuItem>
        <MenuItem $pl={7}><Icon n="xiao" /></MenuItem>
        <MenuItem $pl={4}>广小二</MenuItem>
        <NewsBox>楼梯的构件数量增加了..</NewsBox>
        <MenuItem $pl={9}><Icon n="user" /></MenuItem>
        <MenuItem $pl={4}>13907298339</MenuItem>
        <MenuItem $pl={6}><Caret /></MenuItem>
        <MenuItem $pl={9}>造价豆:0</MenuItem>
        <MenuItem $pl={10}><Icon n="alarm" /></MenuItem>
        <MenuItem $pl={30}><More>»</More></MenuItem>
      </MenuBar>

      <Bar $h={26}>
        <ToolStrip from={2} to={151} items={[T(7, "new", ""), T(28, "open", ""), A(50), T(63, "save", ""), Sp(85), T(92, "undo", ""), A(114), Mo(141)]} />
        <ToolStrip from={153} to={701} items={[
          T(157, "define", "定义"), T(207, "sigma", "汇总计算", { gap: 7 }), T(283, "cloud", "云检查"),
          T(346, "flat", "平齐板顶", { off: 1 }), T(421, "binoc", "查找图元"), T(496, "glasses", "查看钢筋量", { gap: 5 }),
          T(584, "batch", "批量选择", { off: 1 }), Mo(690),
        ]} />
        <ToolStrip from={703} to={1366} items={[
          T(708, "square", "二维"), A(757), T(771, "cube", "俯视", { gap: 4 }), A(822), T(835, "orbit", "动态观察"), T(909, "local", "局部三维", { gap: 4 }),
          Sp(984), T(990, "full", "全屏", { gap: 4 }), T(1041, "zoom", "缩放", { gap: 4 }), A(1092), T(1105, "pan", "平移"), A(1155),
          T(1166, "spin", "屏幕旋转", { gap: 4 }), A(1237), Sp(1250), T(1258, "floors", "选择楼层", { gap: 1 }), Mo(1354),
        ]} />
      </Bar>

      <Workspace>
        <NavPanel>
          <NavHead>
            模块导航栏
            <HeadTools>
              <Pin size={11} fill="#fff" />
              <X size={12} strokeWidth={1} />
            </HeadTools>
          </NavHead>
          <NavBtn>工程设置</NavBtn>
          <NavBtn>绘图输入</NavBtn>
          <TreeBox>
            <TreeTools>
              <Svg width="44" height="18" viewBox="0 0 44 18">
                <path d="M7 2v8M3 6h8M27 6h8" stroke="#12343a" strokeWidth="2.200" />
                <path d="M14 8v8M10 12h8M34 11h8" stroke="#1f9a3a" strokeWidth="2.200" />
              </Svg>
            </TreeTools>
            <TreeMid>
              <TreeView>
                {tree.map(([k, a, label, last, sel], i) =>
                  k === "f" ? (
                    <Row key={i}>
                      <Chevron>{a ? <ChevronDown size={11} strokeWidth={2.4} /> : <ChevronRight size={11} strokeWidth={2.4} color="#aaa" />}</Chevron>
                      <Hook $w={5} />
                      <Icon n={a ? "folderOpen" : "folder"} />
                      <RowLabel>{label}</RowLabel>
                    </Row>
                  ) : (
                    <Row key={i} $child $last={last}>
                      <Hook $w={11} />
                      <Icon n={a} />
                      <RowLabel $sel={sel}><Sim>{label}</Sim></RowLabel>
                    </Row>
                  )
                )}
              </TreeView>
              <VBar>
                <ChevronUp size={13} strokeWidth={2.4} />
                <Thumb $h={208} $mt={39} />
                <ChevronDown size={13} strokeWidth={2.4} style={{ marginTop: "auto", marginBottom: 2 }} />
              </VBar>
            </TreeMid>
            <HBar>
              <ChevronLeft size={13} strokeWidth={2.4} />
              <HThumb $w={102} $ml={-12} />
              <ChevronRight size={13} strokeWidth={2.4} />
            </HBar>
          </TreeBox>
          <NavBtn>单构件输入</NavBtn>
          <NavBtn>报表预览</NavBtn>
        </NavPanel>

        <Center>
          <Bar $h={26}>
            <ToolStrip from={172} to={934} items={[
              Gp(174), T(181, "brush", "删除"), Sp(232), T(239, "copy2", "复制"), T(290, "mirror", "镜像", { gap: 2 }), Sp(341), T(347, "move", "移动"), T(398, "rotate", "旋转"), Sp(449),
              T(455, "extend", "延伸", { off: 1 }), T(506, "trim", "修剪", { off: 1 }), Sp(557), T(563, "brk", "打断", { off: 1 }), T(614, "merge", "合并", { off: 1 }), T(664, "split", "分割", { off: 1 }), Sp(716),
              T(722, "align", "对齐", { off: 1 }), A(767), T(780, "offset", "偏移", { off: 1 }), T(832, "stretch", "拉伸", { off: 1 }), Mo(923),
            ]} />
          </Bar>
          <Bar $h={24} $mt={2}>
            <ToolStrip from={172} to={934} items={[
              Cb(179, "首层", 45), Cb(239, "门窗洞", 57), Cb(311, "墙洞", 57), Cb(383, "D-2", 57), Cb(455, "分层1", 57), Sp(529),
              T(532, "attr", "属性", { active: 1, pl: 2 }), T(583, "pencil", "编辑钢筋", { active: 1, pl: 2, gap: 3 }),
              T(661, "list", "构件列表", { gap: 4 }), T(738, "dropper", "拾取构件", { gap: 2 }), Gp(813), T(821, "two", "两点", { gap: 4 }), T(873, "par", "平行", { gap: 3 }), Mo(923),
            ]} />
          </Bar>
          <Bar $h={24} $mt={5}>
            <ToolStrip from={172} to={458} items={[
              Gp(174), T(178, "cursor", "选择", { active: 1, bw: 52, h: 22, pl: 5, gap: 3 }), A(231), Sp(245), T(250, "point", "点", { gap: 4 }), Sp(290),
              T(295, "smart", "智能布置", { gap: 3 }), A(365), Sp(379), T(384, "precise", "精确布置", { gap: 4 }),
            ]} />
            <SpacerGap $w={126} />
            <ToolStrip from={586} to={614} items={[Gp(588)]} />
          </Bar>
          <Drawing />
          <Bar $h={25} $mt={2}>
            <ToolStrip from={172} to={934} items={[
              Gp(175), T(180, "ortho", "正交", { gap: 4 }), T(229, "snap", "对象捕捉", { active: 1, pl: 2, gap: 2, bw: 75, h: 23 }), T(306, "dyn", "动态输入", { gap: 4 }), Sp(383),
              T(392, "cross", "交点", { gap: 4 }), T(440, "perp", "垂点", { active: 1, pl: 2, gap: 3, h: 23 }), T(491, "mid", "中点", { active: 1, pl: 3, gap: 5, bw: 51, h: 23 }), T(547, "vertex", "顶点", { gap: 3 }), T(597, "coord", "坐标", { gap: 2 }), Sp(648),
              Cb(655, "不偏移", 48), Nd(718, <FieldLabel>X=</FieldLabel>), Nd(740, <SpinField w={57} />), Nd(798, <FieldLabel>mm Y=</FieldLabel>), Nd(843, <SpinField w={58} />), Mo(923),
            ]} />
          </Bar>
          <Lower>
            <Gutter>
              <Svg width="10" height="10" viewBox="0 0 10 10"><rect x=".5" y=".5" width="9" height="9" fill="#eef" stroke="#555" /><path d="M2 2l6 6M8 2L2 8" stroke="#b33" /></Svg>
              <GutterDots />
            </Gutter>
            <Pane>
              <PaneBar>
                <ToolStrip from={182} to={934} items={[
                  T(188, "first", ""), T(210, "prev", ""), T(234, "next", ""), T(258, "last", ""), Sp(279), T(285, "up", ""), T(309, "down", ""), Sp(331),
                  T(337, "ins", "插入", { off: 1, gap: 4 }), T(387, "del", "删除", { off: 1, gap: 5 }), T(440, "scale", "缩尺配筋", { gap: 2 }), T(515, "info", "钢筋信息", { gap: 3 }), T(591, "lib", "钢筋图库", { gap: 3 }),
                  T(665, "other", "其他", { gap: 3 }), A(710), T(725, "none", "关闭", { s: 0, gap: 0 }), Sp(756), T(764, "none", "单构件钢筋总重(kg) : 30.134", { s: 0, gap: 0 }),
                ]} />
              </PaneBar>
              <Grid>
                <colgroup>
                  {[35, 73, 201, 167, 156, 61, 59].map((w, i) => <col key={i} width={w} />)}
                </colgroup>
                <thead>
                  <tr>
                    <Th />
                    <Th>筋号</Th>
                    <Th>图形</Th>
                    <Th>计算公式</Th>
                    <Th>公式描述</Th>
                    <Th><Sim>长度(mm)</Sim></Th>
                    <Th $hot />
                  </tr>
                </thead>
                <tbody>
                  {[
                    ["1*", "洞口水平加强筋.1", "洞口宽度+锚固长度+锚固长度"],
                    ["2", "洞口垂直加强筋.1", "洞口高度+锚固长度+锚固长度"],
                  ].map(([n, name, desc], i) => (
                    <tr key={n}>
                      <Td $h={29} $mid $bg={i ? "#f7f7f7" : "#fdd38f"} $fg={i ? "#111" : "#5c0a6e"}><Sim>{n}</Sim></Td>
                      <Td $bg="#c8fdd2"><Sim>{name}</Sim></Td>
                      <Td $ink $bg="#c8fdd2"><FigLen><Sim>2384</Sim></FigLen><FigBar /></Td>
                      <Td $bg="#c8fdd2"><Sim>1200+37*d+37*d</Sim></Td>
                      <Td $bg="#c8fdd2"><Sim>{desc}</Sim></Td>
                      <Td $bg="#c8fdd2"><Sim>2384</Sim></Td>
                      <Td $bg={i ? "#c8fdd2" : "#aee9d8"}><Sim>4</Sim></Td>
                    </tr>
                  ))}
                  <tr>
                    <Td $h={19} $mid $bg="#f7f7f7"><Sim>3</Sim></Td>
                    <Td /><Td $ink /><Td /><Td /><Td /><Td />
                  </tr>
                </tbody>
              </Grid>
              <BottomScroll><HThumb $w={234} /></BottomScroll>
            </Pane>
          </Lower>
        </Center>

        <RightPanel>
          <RightHead>
            属性编辑器
            <HeadTools $pr={4}>
              <Pin size={11} fill="#222" />
              <X size={12} strokeWidth={1} color="#444" />
            </HeadTools>
          </RightHead>
          <RightBody>
            <PropGrid>
              <colgroup>
                <col width="21" /><col width="120" /><col width="282" />
              </colgroup>
              <thead>
                <tr>
                  <PropHead />
                  <PropHead>属性名称</PropHead>
                  <PropHead $hot>属性值</PropHead>
                </tr>
              </thead>
              <tbody>
                {props_.map(([name, val, fg, on], i) => (
                  <tr key={name}>
                    <PropNum $on={on}><Sim>{i + 1}</Sim></PropNum>
                    <PropName $on={on} $fg={fg}>
                      {i === 12 && <PlusBox>+</PlusBox>}
                      <Sim>{name}</Sim>
                    </PropName>
                    <PropVal $on={on}><Sim>{val}</Sim></PropVal>
                  </tr>
                ))}
              </tbody>
            </PropGrid>
          </RightBody>
        </RightPanel>
      </Workspace>

      <StatusBar>
        <StatusCell $w={148}><Sim>X=71687 Y=6168</Sim></StatusCell>
        <StatusCell $w={78}><Sim>层高:4.5m</Sim></StatusCell>
        <StatusCell $w={98}><Sim>底标高:-0.05m</Sim></StatusCell>
        <StatusCell $w={48}><Sim>1(3)</Sim></StatusCell>
        <StatusCell $w={914}><Sim>按鼠标左键选择一个图元，按右键中止或ESC取消</Sim></StatusCell>
        <StatusCell $w={70}><Sim>478.8 FPS</Sim></StatusCell>
      </StatusBar>

      <TaskBar>
        <StartBtn><FaWindows size={17} /></StartBtn>
        <Search>
          <Ring />
          在这里输入你要搜索的内容
          <MicWrap><Mic size={17} strokeWidth={1.4} /></MicWrap>
        </Search>
        <TaskSlot $w={46}><Svg width="22" height="16" viewBox="0 0 22 16"><path d="M6 1h10v14H6zM3 3H1v10h2M19 3h2v10h-2" fill="none" stroke="#eee" /></Svg></TaskSlot>
        <TaskSlot $w={55}><Svg width="24" height="26" viewBox="0 0 24 26"><path d="M12 12C2 14 2 2 8 1c5 0 5 7 4 11zM12 14c10-2 10 10 4 11-5 0-5-7-4-11zM11 13C9 23-1 22 1 16c1-4 7-4 10-3zM13 11C15 1 25 2 23 8c-1 4-7 4-10 3z" fill="#e8e8e8" /></Svg></TaskSlot>
        <TaskSlot $w={48}><IeMark c="#eee" ring="#eee" /></TaskSlot>
        <TaskSlot $w={53}><Svg width="26" height="28" viewBox="0 0 26 28"><path d="M19 17a8 8 0 1 1 0-7M9 14a4 4 0 0 1 8 0 3 3 0 0 1-6 0" stroke="#bbb" fill="none" strokeWidth="1.500" /></Svg><BellOver size={12} color="#f0b429" /></TaskSlot>
        <TaskSlot $w={20}><TaskDivider /></TaskSlot>
        <TaskSlot $w={47}><TaskGlyph $fs={30} $c="#0a84e0">e</TaskGlyph></TaskSlot>
        <TaskSlot $w={41}><IeMark c="#37a6e8" ring="#f0c040" /></TaskSlot>
        <TaskSlot $w={37}><Svg width="24" height="22" viewBox="0 0 24 22"><path d="M1 3h8l2 2h12v15H1z" fill="#f2cf6b" /><path d="M8 13h8v7H8z" fill="#3ea2d8" /></Svg></TaskSlot>
        <TaskSlot $w={35} $run><Svg width="24" height="26" viewBox="0 0 24 26"><circle cx="12" cy="13" r="11" fill="#5fb12f" stroke="#cfe8b8" /><ellipse cx="12" cy="13" rx="6" ry="8" fill="#fff" /><path d="M7 13h10" stroke="#4b9c22" strokeWidth="2" /></Svg></TaskSlot>
        <TaskSlot $w={43} $run><TaskGlyph $fs={30} $c="#1f93e6">G</TaskGlyph></TaskSlot>
        <TaskSlot $w={38} $run $cur><LetterTile $s={24} $bg="#0d8ee8" $fs={14}><Svg width="18" height="18" viewBox="0 0 16 16"><path d="M8 2v12M3 8h10M8 4a2.500 2.500 0 0 1 3 4" stroke="#fff" strokeWidth="1.800" fill="none" /></Svg></LetterTile></TaskSlot>
        <TaskSlot $w={40} $run><Svg width="26" height="26" viewBox="0 0 26 26"><rect width="26" height="26" rx="3" fill="#f0a01e" /><path d="M7 7l11 2-2 11-11-2z" fill="#fff3d6" /><path d="M9 11l6 1M8 14l6 1" stroke="#a86a10" /><path d="M15 16l7-13" stroke="#c9501a" strokeWidth="1.500" /></Svg></TaskSlot>
        <Stack $w={52} $ml={14} $fs={13} $c="#bbb" $rule>链接</Stack>
        <Stack $w={55} $ml={4}><span>30%</span><span>CPU使用</span></Stack>
        <TaskSlot $w={24} $ml={9}><ChevronUp size={17} strokeWidth={1.5} /></TaskSlot>
        <TaskSlot $w={25}><FaBell size={15} color="#eee" /></TaskSlot>
        <TaskSlot $w={24}><BatteryCharging size={17} strokeWidth={1.4} /></TaskSlot>
        <TaskSlot $w={25}><Wifi size={15} strokeWidth={1.4} /></TaskSlot>
        <TaskSlot $w={22}><Volume1 size={16} strokeWidth={1.4} /></TaskSlot>
        <TaskSlot $w={34}><Keyboard size={24} strokeWidth={1} /></TaskSlot>
        <TaskSlot $w={22}>中</TaskSlot>
        <TaskSlot $w={34}><LetterTile $s={15} $bg="#f0531c" $fs={12}>S</LetterTile></TaskSlot>
        <Stack $w={66} $fs={13}><span>14:57</span><span>2018/8/1</span></Stack>
        <TaskSlot $w={61} $black><Svg width="18" height="20" viewBox="0 0 18 20"><path d="M1 2h16v12h-6l-2 3-2-3H1z" fill="none" stroke="#eee" /></Svg></TaskSlot>
      </TaskBar>

      {/* overlays: annotations over the app */}
      <Notes width="1366" height="768" viewBox="0 0 1366 768">
        <g fill="none" stroke="#f00" strokeWidth="6.5">
          <ellipse cx="317.500" cy="376.500" rx="87" ry="36" />
          <ellipse cx="558" cy="544.500" rx="105" ry="39" />
          <ellipse cx="1073" cy="191.500" rx="150" ry="21.500" />
        </g>
      </Notes>
      <RedNote>650 *650</RedNote>
      <Badge>73</Badge>
      <Sogou>
        <SogouLogo>S</SogouLogo>
        <SogouBox>
          <SogouItem $w={28}>中</SogouItem>
          <SogouItem $w={15}>,</SogouItem>
          <SogouItem $w={26}><FaRegSmile size={16} /></SogouItem>
          <SogouItem $w={18}><FaMicrophone size={15} /></SogouItem>
          <SogouItem $w={24}><FaRegKeyboard size={16} /></SogouItem>
          <SogouItem $w={21} $c="#b9c4cc"><FaUserTie size={15} /></SogouItem>
          <SogouItem $w={21}><FaTshirt size={15} /></SogouItem>
          <SogouItem $w={16}><FaWrench size={14} /></SogouItem>
        </SogouBox>
      </Sogou>
    </Page>
  );
}
